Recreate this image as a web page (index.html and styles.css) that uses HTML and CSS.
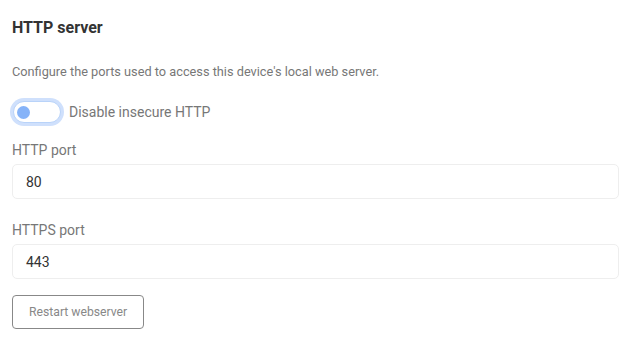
FILE: index.html
```html
<!DOCTYPE html>
<html lang="en">
<head>
    <meta charset="UTF-8">
    <meta name="viewport" content="width=device-width, initial-scale=1.0">
    <title>HTTP server</title>
    <link rel="stylesheet" href="styles.css">
</head>
<body>
    <div class="panel">
        <h2 class="title">HTTP server</h2>
        <p class="desc">Configure the ports used to access this device's local web server.</p>

        <label class="switch-row">
            <span class="switch"><span class="knob"></span></span>
            <span class="switch-label">Disable insecure HTTP</span>
        </label>

        <div class="field">
            <div class="field-label">HTTP port</div>
            <div class="input">80</div>
        </div>

        <div class="field">
            <div class="field-label">HTTPS port</div>
            <div class="input">443</div>
        </div>

        <button class="btn">Restart webserver</button>
    </div>
</body>
</html>
```

FILE: styles.css
```css
* {
    margin: 0;
    padding: 0;
    box-sizing: border-box;
}

body {
    font-family: Roboto, "Liberation Sans", sans-serif;
    background: #fff;
    color: #333;
}

.panel {
    padding: 18px 11px 0 12px;
    display: flex;
    flex-direction: column;
    align-items: flex-start;
}

.title {
    font-size: 16px;
    font-weight: 700;
    color: #333;
    line-height: 20px;
}

.desc {
    margin-top: 26px;
    font-size: 12.75px;
    color: #777;
    line-height: 16px;
}

.switch-row {
    display: flex;
    align-items: center;
    margin-top: 21px;
    margin-left: 1px;
}

.switch {
    width: 48px;
    height: 22px;
    border: 1px solid #b9d3f9;
    border-radius: 11px;
    background: #fff;
    box-shadow: 0 0 0 3px #cfe0fc;
    display: flex;
    align-items: center;
    padding-left: 3px;
}

.knob {
    width: 13px;
    height: 13px;
    border-radius: 50%;
    background: #86b3f8;
}

.switch-label {
    margin-left: 8px;
    font-size: 14px;
    color: #777;
}

.field {
    align-self: stretch;
    margin-top: 19px;
}

.field + .field {
    margin-top: 23px;
}

.field-label {
    font-size: 14px;
    color: #777;
    line-height: 16px;
}

.input {
    margin-top: 6px;
    height: 35px;
    border: 1px solid #eeeeee;
    border-radius: 5px;
    padding: 0 13px;
    font-size: 14px;
    color: #333;
    display: flex;
    align-items: center;
}

.btn {
    margin-top: 16px;
    height: 34px;
    padding: 0 16px;
    border: 1px solid #888;
    border-radius: 4px;
    background: #fff;
    color: #888;
    font-family: inherit;
    font-size: 12.2px;
}
```
